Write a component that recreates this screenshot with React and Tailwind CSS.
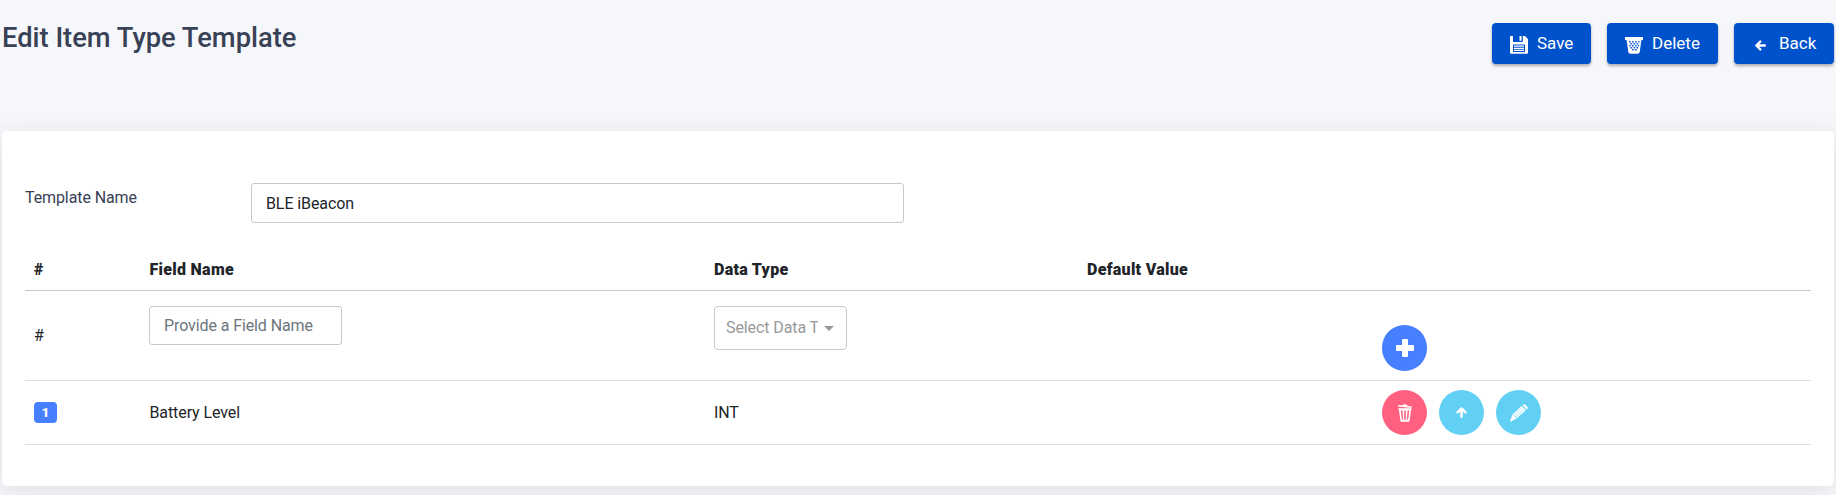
import React from "react";

function SaveIcon() {
  return (
    <svg width="18" height="18" viewBox="0 0 18 18">
      <path fill="#fff" fillRule="evenodd" d="M.8 0H3v6h9.800V0H15l3 3v13.800a1 1 0 0 1-1 1H1a1 1 0 0 1-1-1V.8A.8.8 0 0 1 .8 0ZM9.500 0h2v4.700h-2ZM3 8.400v7.600h12V8.400Z" />
      <path stroke="#fff" strokeWidth="1.300" d="M4 10.200h10M4 12.300h10M4 14.400h10" />
    </svg>
  );
}

function BasketIcon() {
  return (
    <svg width="18" height="17" viewBox="0 0 18 17">
      <path fill="#fff" d="M0 0h18v3H0Z" />
      <path fill="#fff" d="M1.500 2h15L14.800 14.500Q14.500 16.700 12.500 16.700h-7Q3.500 16.700 3.200 14.500Z" />
      <path fill="#0f5bd1" d="M4 4h1.600v1.600H4zM7 4h1.600v1.600H7zM10 4h1.600v1.600H10zM13 4h1.400v1.600H13zM5.500 6h1.600v1.600H5.500zM8.500 6h1.600v1.600H8.500zM11.500 6h1.600v1.600h-1.600zM4.400 8h1.300v1.600H4.400zM7 8h1.600v1.600H7zM10 8h1.600v1.600H10zM12.800 8h1.200v1.600h-1.200zM5.500 10h1.600v1.600H5.500zM8.500 10h1.600v1.600H8.500zM11.500 10h1.600v1.600h-1.600zM7 12h1.600v1.600H7zM10 12h1.600v1.600H10z" />
    </svg>
  );
}

function ArrowIcon({ className = "" }) {
  return (
    <svg className={className} width="11" height="11" viewBox="0 0 11 11" fill="none" stroke="#fff" strokeWidth="2.400" strokeLinecap="round" strokeLinejoin="round">
      <path d="M1.400 5.500H9.800M5.300 1.500 1.400 5.500l3.900 4" />
    </svg>
  );
}

function PlusIcon() {
  return (
    <svg width="18" height="18" viewBox="0 0 18 18" fill="#fff">
      <path d="M7 0h4a1 1 0 0 1 1 1v5h5a1 1 0 0 1 1 1v4a1 1 0 0 1-1 1h-5v5a1 1 0 0 1-1 1H7a1 1 0 0 1-1-1v-5H1a1 1 0 0 1-1-1V7a1 1 0 0 1 1-1h5V1a1 1 0 0 1 1-1Z" />
    </svg>
  );
}

function TrashIcon() {
  return (
    <svg width="14" height="18" viewBox="0 0 14 18" fill="#fff">
      <path d="M.3.900 5 1.200 5.400.200 8.800.5 9 1.700l4.700.7-.2 1.500L.100 2.500Z" />
      <path fillRule="evenodd" d="M.4 4.200h13.200v1.300l-.5.200-1.500 11.100q-.1.900-1 .9H3.400q-.9 0-1-.9L.9 5.700.4 5.500ZM2.700 6.500l1.200 9.300h1.200L4.500 6.500ZM6.200 6.500v9.300h1.600V6.500ZM9.500 6.500l-.6 9.300h1.200l1.200-9.300Z" />
    </svg>
  );
}

function PencilIcon() {
  return (
    <svg width="18" height="18" viewBox="0 0 18 18">
      <path fill="#fff" d="M12.700 1 14 .3q.6-.3 1.100.2l2.400 2.700q.5.600 0 1.200l-1.200 1.300Z" />
      <path fill="#fff" d="m11.800 1.700 4 4.600-9.600 8.500L.3 17.700q-.6.200-.2-.5L2.400 10.600Z" />
      <path stroke="#62d0f4" strokeWidth=".6" fill="none" d="M11.500 4.200 4.300 11M13.300 6 6 12.600M2.800 10.600l1.300.5.500 1.300 1.500.3.300 1.500M12 1.800l3.900 4.400" />
    </svg>
  );
}

function HeaderButton({ icon, label, className }) {
  return (
    <button className={`flex h-[41px] items-center rounded bg-[#0052cc] text-[17px] tracking-normal text-white shadow-[0_2px_3px_rgba(0,0,0,0.3)] ${className}`}>
      {icon}
      <span>{label}</span>
    </button>
  );
}

function RoundButton({ className, children }) {
  return (
    <button className={`flex w-[45px] items-center justify-center rounded-full ${className}`}>
      {children}
    </button>
  );
}

const columns = "grid grid-cols-[115px_565px_373px_295px_1fr] px-[9px]";

export default function App() {
  return (
    <div className="h-[495px] overflow-hidden bg-[#f5f7fb] px-[2px] font-['Roboto',sans-serif] text-base tracking-[-0.1px] text-[#212529]">
      <header className="flex h-[131px] items-start justify-between">
        <h1 className="pt-[18px] text-[27.300px] leading-10 font-medium tracking-normal text-[#384155]">Edit Item Type Template</h1>
        <div className="flex gap-4 pt-[23px]">
          <HeaderButton className="w-[99px] gap-[9px] pl-[18px]" label="Save" icon={<span className="pt-[3px]"><SaveIcon /></span>} />
          <HeaderButton className="w-[111px] gap-[9px] pl-[18px]" label="Delete" icon={<span className="pt-[3px]"><BasketIcon /></span>} />
          <HeaderButton className="w-[100px] gap-[13px] pl-[21px]" label="Back" icon={<span className="pt-[3px]"><ArrowIcon /></span>} />
        </div>
      </header>
      <main className="h-[355px] rounded-[5px] bg-white px-[23px] pt-[52px] shadow-[0_4px_25px_rgba(0,0,0,0.1)]">
        <div className="flex h-[66px] items-start">
          <label className="w-[226px] pt-[3px] leading-6 text-[#384155]">Template Name</label>
          <input className="h-10 w-[653px] rounded-[3px] border border-[#c8c8c8] px-[14px] text-[#212529]" defaultValue="BLE iBeacon" />
        </div>
        <div className="w-[1786px]">
          <div className={`${columns} h-[42px] items-start border-b border-[#c8c8c8] pt-[9px] leading-6 font-black tracking-[0.3px]`}>
            <div>#</div>
            <div className="pl-[0.5px]">Field Name</div>
            <div>Data Type</div>
            <div>Default Value</div>
          </div>
          <div className={`${columns} h-[90px] items-start border-b border-[#dee0e4]`}>
            <div className="pt-[33px] leading-6">#</div>
            <div className="pt-[15px]">
              <input className="block h-[39px] w-[193px] rounded-[3px] border border-[#c8c8c8] px-[14px] placeholder:text-[#6c757d]" placeholder="Provide a Field Name" />
            </div>
            <div className="pt-[15px]">
              <div className="flex h-11 w-[133px] items-center rounded border border-[#c8c8c8] pl-[11px] text-[#999]">
                <span className="w-[92px] overflow-hidden leading-6 whitespace-nowrap">Select Data Type</span>
                <span className="ml-[6px] border-x-[5px] border-t-[5px] border-x-transparent border-t-[#999]" />
              </div>
            </div>
            <div />
            <div className="pt-[34px]">
              <RoundButton className="h-[46px] bg-[#467fff]"><PlusIcon /></RoundButton>
            </div>
          </div>
          <div className={`${columns} h-16 items-center border-b border-[#dee0e4]`}>
            <div>
              <span className="flex h-[21px] w-[23px] items-center justify-center rounded bg-[#467fff] text-[13px] font-black text-white">1</span>
            </div>
            <div className="pl-[0.5px]">Battery Level</div>
            <div>INT</div>
            <div />
            <div className="flex gap-3">
              <RoundButton className="h-[45px] bg-[#ff6080]"><TrashIcon /></RoundButton>
              <RoundButton className="h-[45px] bg-[#62d0f4]"><ArrowIcon className="rotate-90" /></RoundButton>
              <RoundButton className="h-[45px] bg-[#62d0f4]"><PencilIcon /></RoundButton>
            </div>
          </div>
        </div>
      </main>
    </div>
  );
}
